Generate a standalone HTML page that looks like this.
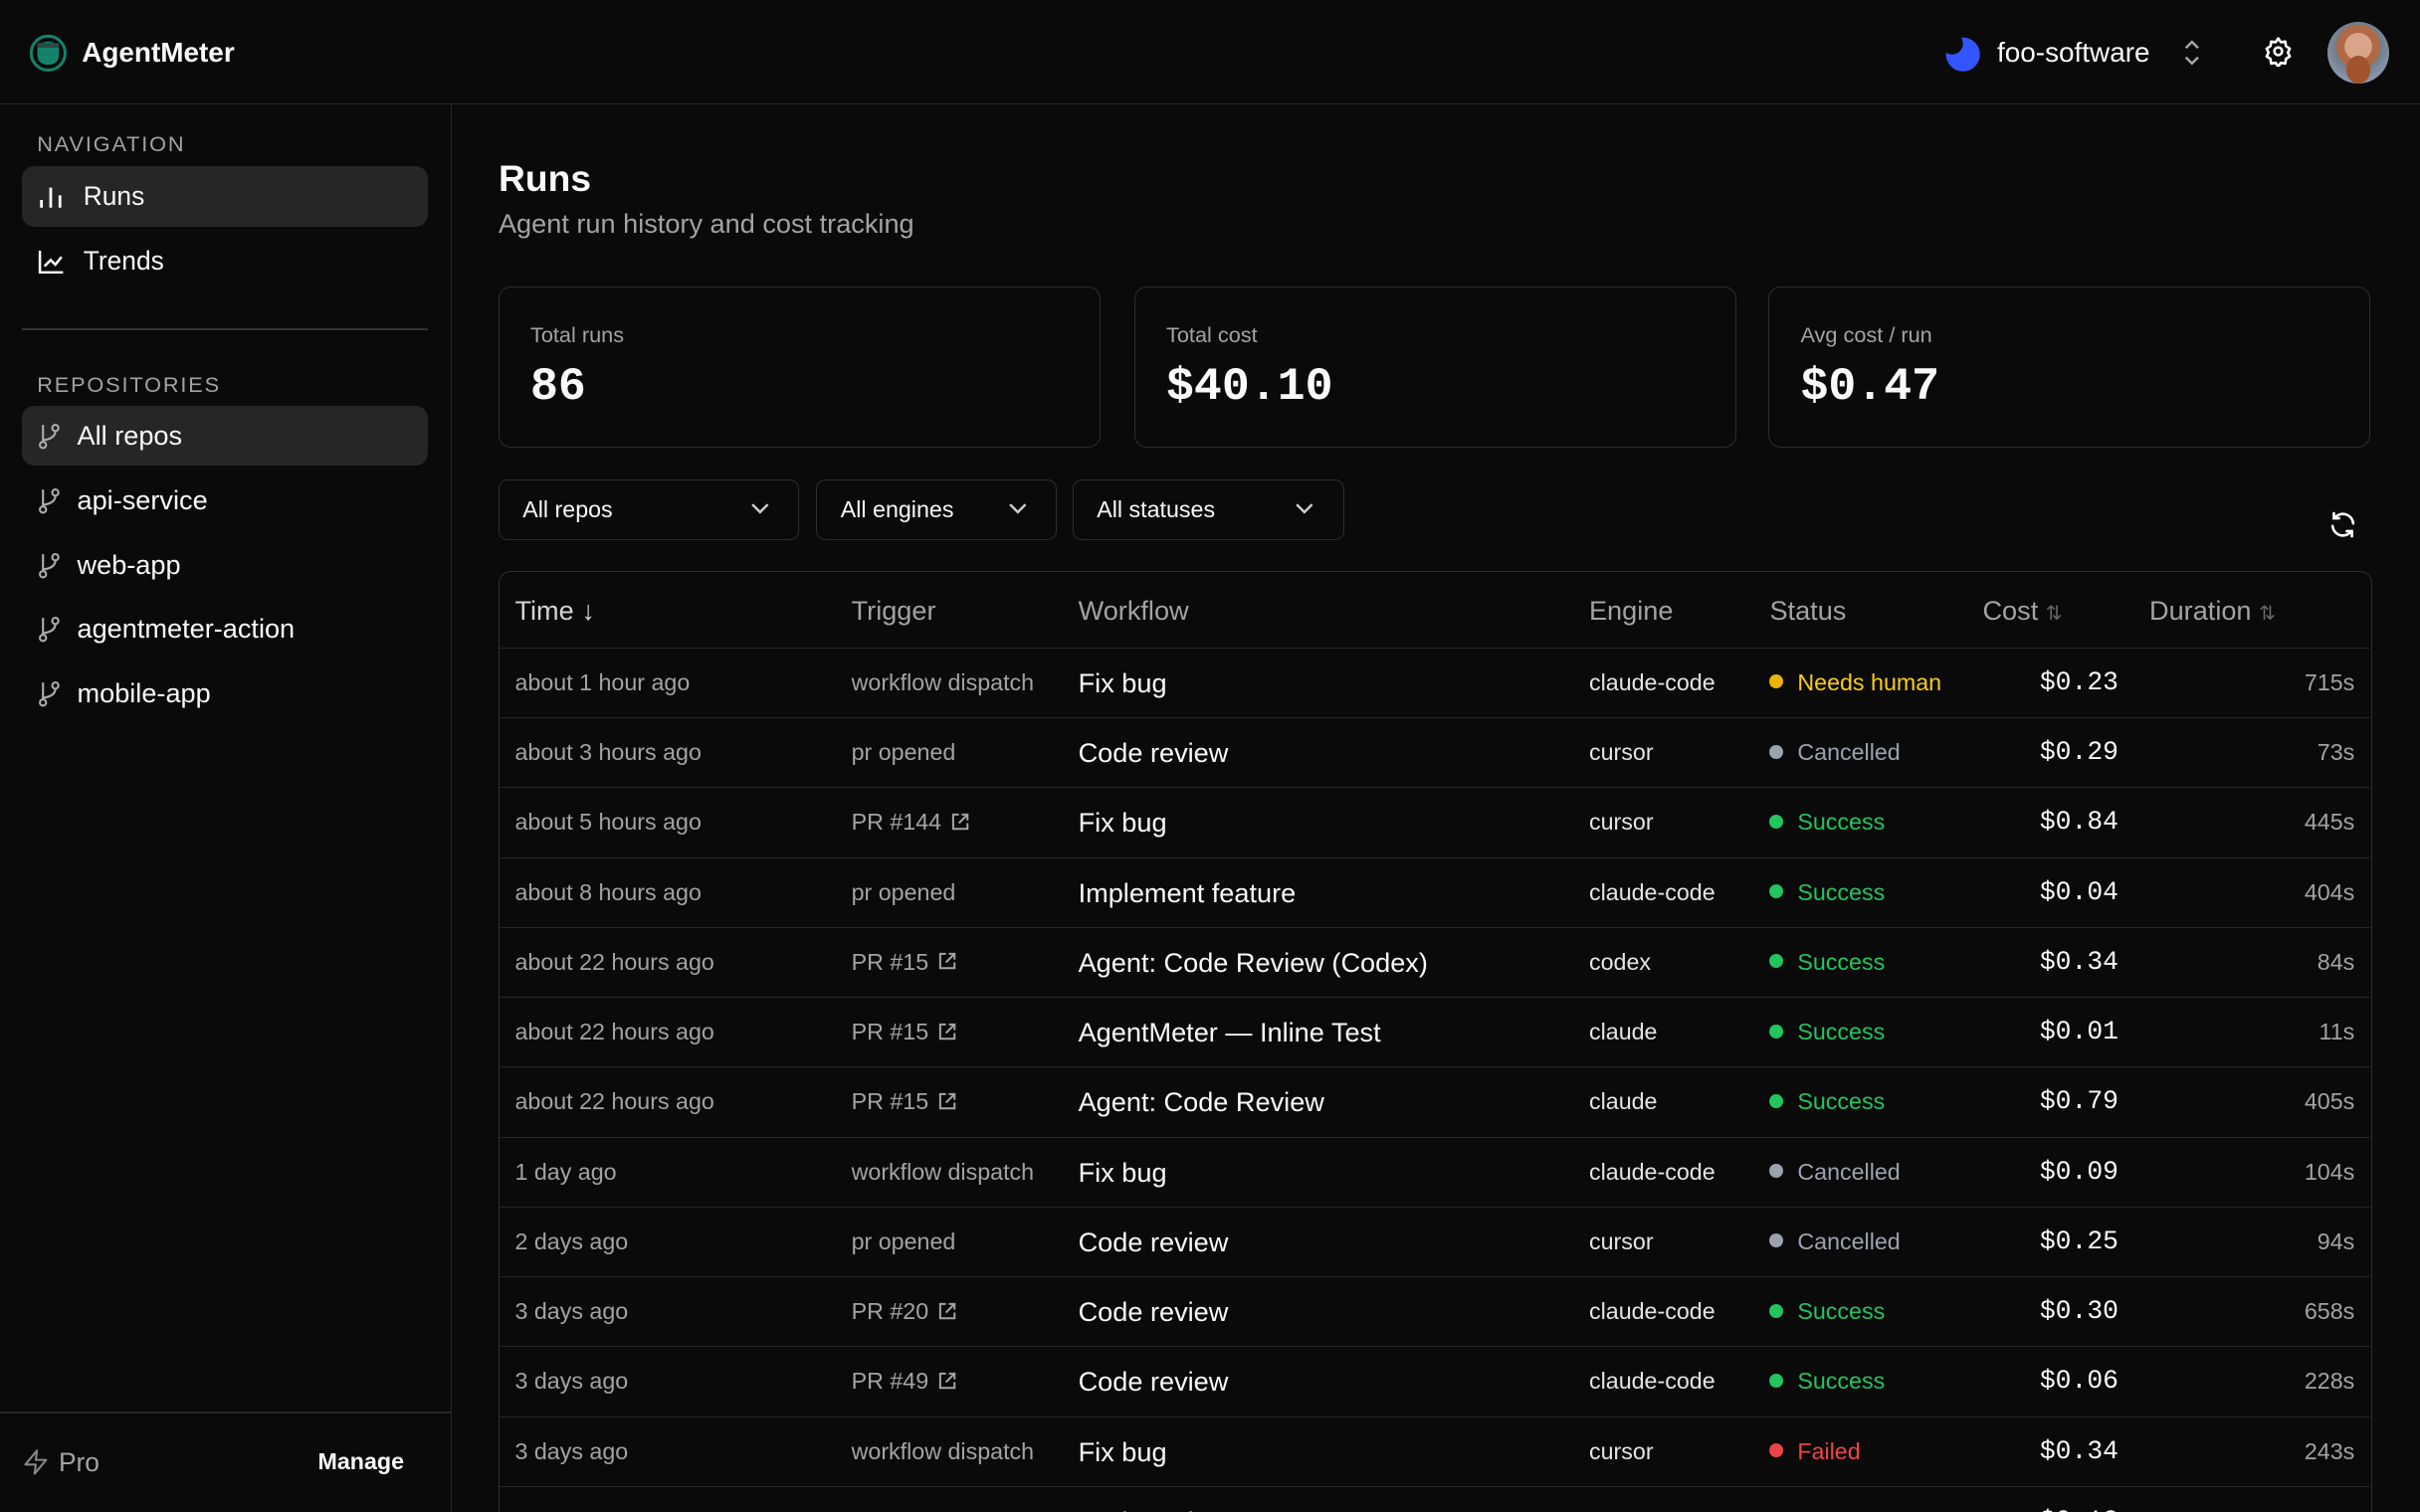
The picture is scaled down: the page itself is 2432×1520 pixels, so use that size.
<!DOCTYPE html>
<html><head><meta charset="utf-8"><style>
html,body{margin:0;padding:0;background:#0a0a0a;overflow:hidden}
body{width:2432px;height:1520px}
#w{zoom:1.5510;width:1568px;height:980px;position:relative;font-family:"Liberation Sans",sans-serif;color:#fafafa;overflow:hidden}
.top{position:absolute;left:0;top:0;width:1568px;height:67px;border-bottom:1px solid #262626}
.side{position:absolute;left:0;top:68px;width:292px;height:912px;border-right:1px solid #262626}
.lbl{position:absolute;left:24px;font-size:14px;letter-spacing:1.2px;color:#a3a3a3}
.item{position:absolute;left:14px;width:263px;height:39px;border-radius:8px;font-size:17px;display:flex;align-items:center}
.item.act{background:#262626}
.item svg{margin-left:10px;margin-right:12px}
.card{position:absolute;top:186px;width:390px;height:104px;border:1px solid #2e2e2e;border-radius:8px;box-sizing:border-box}
.card .t{position:absolute;left:20px;top:22px;font-size:14px;color:#a3a3a3}
.card .v{position:absolute;left:20px;top:47px;font-size:30px;font-family:"Liberation Mono",monospace;font-weight:bold}
.sel{position:absolute;top:311px;height:39px;border:1px solid #2e2e2e;border-radius:6px;box-sizing:border-box;font-size:15px;display:flex;align-items:center;padding-left:15px}
.sel svg{position:absolute;right:18px;top:13px}
.tbl{position:absolute;left:323px;top:370px;width:1214px;height:620px;border:1px solid #2e2e2e;border-radius:8px;box-sizing:border-box}
.row{position:absolute;left:0;width:1212px;height:45px;border-top:1px solid #262626;font-size:15px}
.row div{position:absolute;top:0;line-height:45px;white-space:nowrap}
.c1{left:10px;color:#a3a3a3}.c2{left:228px;color:#a3a3a3}.c3{left:375px;font-size:17.5px;color:#fafafa}
.c4{left:706px;color:#e5e5e5}.c5{left:823px}.c6{right:163px;font-family:"Liberation Mono",monospace;font-size:17px}.c7{right:10px;color:#a3a3a3}
.dot{display:inline-block;width:9px;height:9px;border-radius:50%;margin-right:9px;vertical-align:1px}
.hd div{position:absolute;top:0;line-height:50px;font-size:17.5px;color:#a3a3a3}
</style></head><body><div id="w">
<div class="top">
 <svg style="position:absolute;left:19px;top:22px" width="25" height="25" viewBox="0 0 25 25"><circle cx="12.5" cy="12.5" r="11" fill="none" stroke="#14806a" stroke-width="2"/><path d="M5.5 8 Q12.5 2 19.5 8 L19.5 14 Q19 20 12.5 20 Q6 20 5.5 14Z" fill="#15836c"/><rect x="5.5" y="6" width="14" height="3" fill="#2a4a43"/></svg>
 <div style="position:absolute;left:53px;top:24px;font-size:18px;font-weight:bold">AgentMeter</div>
 <svg style="position:absolute;left:1258px;top:21px" width="26" height="26" viewBox="0 0 26 26"><circle cx="14" cy="14" r="11" fill="#3355ff"/><circle cx="7" cy="7" r="7" fill="#0a0a0a"/></svg>
 <div style="position:absolute;left:1294px;top:24px;font-size:18px">foo-software</div>
 <svg style="position:absolute;left:1413px;top:25px" width="14" height="18" viewBox="0 0 14 18"><path d="M3 6 L7 2 L11 6 M3 12 L7 16 L11 12" fill="none" stroke="#a3a3a3" stroke-width="1.6"/></svg>
 <svg style="position:absolute;left:1466px;top:23px" width="20" height="20" viewBox="0 0 24 24" fill="none" stroke="#fff" stroke-width="2"><path d="M12 2l2 3 3.5-.5.5 3.5 3 2-1.5 3 1.5 3-3 2-.5 3.5-3.5-.5-2 3-2-3-3.5.5-.5-3.5-3-2 1.5-3-1.5-3 3-2 .5-3.5 3.5.5z" stroke-linejoin="round"/><circle cx="12" cy="12" r="3"/></svg>
 <div style="position:absolute;left:1508px;top:14px;width:40px;height:40px;border-radius:50%;background:radial-gradient(circle at 50% 40%,#d9a58a 0 28%,#b06a45 29% 45%,#6d7f8a 46%,#aac 100%);overflow:hidden"><div style="position:absolute;left:12px;top:22px;width:16px;height:18px;border-radius:50%;background:#a0532c"></div></div>
</div>
<div class="side">
 <div class="lbl" style="top:17px">NAVIGATION</div>
 <div class="item act" style="top:40px"><svg width="18" height="18" viewBox="0 0 18 18" stroke="#fff" stroke-width="1.8"><path d="M3 16V11M9 16V3M15 16V8"/></svg>Runs</div>
 <div class="item" style="top:82px"><svg width="18" height="18" viewBox="0 0 18 18" fill="none" stroke="#fff" stroke-width="1.6"><path d="M2 2V16H17M5 12L9 8L12 11L16 6"/></svg>Trends</div>
 <div style="position:absolute;left:14px;top:145px;width:263px;height:1px;background:#333"></div>
 <div class="lbl" style="top:173px">REPOSITORIES</div>
 <div class="item act" style="top:195px;font-size:17.5px"><svg style="margin-right:10px" width="16" height="18" viewBox="0 0 16 18" fill="none" stroke="#aaa" stroke-width="1.4"><circle cx="4" cy="15" r="2"/><circle cx="12" cy="4" r="2"/><path d="M4 13V2M12 6Q12 11 4 12"/></svg>All repos</div>
 <div class="item" style="top:237px;font-size:17.5px"><svg style="margin-right:10px" width="16" height="18" viewBox="0 0 16 18" fill="none" stroke="#aaa" stroke-width="1.4"><circle cx="4" cy="15" r="2"/><circle cx="12" cy="4" r="2"/><path d="M4 13V2M12 6Q12 11 4 12"/></svg>api-service</div>
 <div class="item" style="top:279px;font-size:17.5px"><svg style="margin-right:10px" width="16" height="18" viewBox="0 0 16 18" fill="none" stroke="#aaa" stroke-width="1.4"><circle cx="4" cy="15" r="2"/><circle cx="12" cy="4" r="2"/><path d="M4 13V2M12 6Q12 11 4 12"/></svg>web-app</div>
 <div class="item" style="top:320px;font-size:17.5px"><svg style="margin-right:10px" width="16" height="18" viewBox="0 0 16 18" fill="none" stroke="#aaa" stroke-width="1.4"><circle cx="4" cy="15" r="2"/><circle cx="12" cy="4" r="2"/><path d="M4 13V2M12 6Q12 11 4 12"/></svg>agentmeter-action</div>
 <div class="item" style="top:362px;font-size:17.5px"><svg style="margin-right:10px" width="16" height="18" viewBox="0 0 16 18" fill="none" stroke="#aaa" stroke-width="1.4"><circle cx="4" cy="15" r="2"/><circle cx="12" cy="4" r="2"/><path d="M4 13V2M12 6Q12 11 4 12"/></svg>mobile-app</div>
 <div style="position:absolute;left:0;top:847px;width:292px;height:1px;background:#262626"></div>
 <svg style="position:absolute;left:14px;top:871px" width="18" height="18" viewBox="0 0 24 24" fill="none" stroke="#888" stroke-width="1.8" stroke-linejoin="round"><path d="M13 2L3 14h9l-1 8 10-12h-9z"/></svg>
 <div style="position:absolute;left:38px;top:870px;font-size:17px;color:#a3a3a3">Pro</div>
 <div style="position:absolute;left:206px;top:871px;font-size:15px;font-weight:bold">Manage</div>
</div>
<div style="position:absolute;left:323px;top:102px;font-size:24px;font-weight:bold">Runs</div>
<div style="position:absolute;left:323px;top:135px;font-size:17.5px;color:#a3a3a3">Agent run history and cost tracking</div>
<div class="card" style="left:323px"><div class="t">Total runs</div><div class="v">86</div></div>
<div class="card" style="left:735px"><div class="t">Total cost</div><div class="v">$40.10</div></div>
<div class="card" style="left:1146px"><div class="t">Avg cost / run</div><div class="v">$0.47</div></div>
<div class="sel" style="left:323px;width:195px">All repos<svg width="14" height="10" viewBox="0 0 14 10"><path d="M2 2l5 5 5-5" fill="none" stroke="#ccc" stroke-width="1.6"/></svg></div>
<div class="sel" style="left:529px;width:156px">All engines<svg width="14" height="10" viewBox="0 0 14 10"><path d="M2 2l5 5 5-5" fill="none" stroke="#ccc" stroke-width="1.6"/></svg></div>
<div class="sel" style="left:695px;width:176px">All statuses<svg width="14" height="10" viewBox="0 0 14 10"><path d="M2 2l5 5 5-5" fill="none" stroke="#ccc" stroke-width="1.6"/></svg></div>
<svg style="position:absolute;left:1508px;top:330px" width="20" height="20" viewBox="0 0 24 24" fill="none" stroke="#fff" stroke-width="2" stroke-linecap="round"><path d="M20 11A8 8 0 0 0 5.5 7M4 13a8 8 0 0 0 14.5 4M5 3v4h4M19 21v-4h-4"/></svg>
<div class="tbl">
 <div class="hd"><div style="left:10px;color:#d4d4d4">Time ↓</div><div style="left:228px">Trigger</div><div style="left:375px">Workflow</div><div style="left:706px">Engine</div><div style="left:823px">Status</div><div style="left:961px">Cost <span style="font-size:13px;color:#666">⇅</span></div><div style="left:1069px">Duration <span style="font-size:13px;color:#666">⇅</span></div></div>
 <div id="rows"></div>
</div>
<script>
const ext='<svg width="13" height="13" viewBox="0 0 14 14" fill="none" stroke="#a3a3a3" stroke-width="1.4" style="margin-left:6px;vertical-align:-1px"><path d="M6 2H2V12H12V8M8 2H12V6M12 2L6 8"/></svg>';
const S={n:['#eab308','Needs human','#facc15'],c:['#9ca3af','Cancelled','#9ca3af'],s:['#22c55e','Success','#22c55e'],f:['#ef4444','Failed','#ef4444']};
const R=[["about 1 hour ago","workflow dispatch","Fix bug","claude-code","n","$0.23","715s"],
["about 3 hours ago","pr opened","Code review","cursor","c","$0.29","73s"],
["about 5 hours ago","PR #144"+ext,"Fix bug","cursor","s","$0.84","445s"],
["about 8 hours ago","pr opened","Implement feature","claude-code","s","$0.04","404s"],
["about 22 hours ago","PR #15"+ext,"Agent: Code Review (Codex)","codex","s","$0.34","84s"],
["about 22 hours ago","PR #15"+ext,"AgentMeter — Inline Test","claude","s","$0.01","11s"],
["about 22 hours ago","PR #15"+ext,"Agent: Code Review","claude","s","$0.79","405s"],
["1 day ago","workflow dispatch","Fix bug","claude-code","c","$0.09","104s"],
["2 days ago","pr opened","Code review","cursor","c","$0.25","94s"],
["3 days ago","PR #20"+ext,"Code review","claude-code","s","$0.30","658s"],
["3 days ago","PR #49"+ext,"Code review","claude-code","s","$0.06","228s"],
["3 days ago","workflow dispatch","Fix bug","cursor","f","$0.34","243s"],
["3 days ago","pr opened","Code review","cursor","s","$0.12","120s"]];
let h='';R.forEach((r,i)=>{const s=S[r[4]];h+=`<div class="row" style="top:${49+i*45.3}px"><div class="c1">${r[0]}</div><div class="c2">${r[1]}</div><div class="c3">${r[2]}</div><div class="c4">${r[3]}</div><div class="c5" style="color:${s[2]}"><span class="dot" style="background:${s[0]}"></span>${s[1]}</div><div class="c6">${r[5]}</div><div class="c7">${r[6]}</div></div>`});
document.getElementById('rows').innerHTML=h;
</script>
</div></body></html>
